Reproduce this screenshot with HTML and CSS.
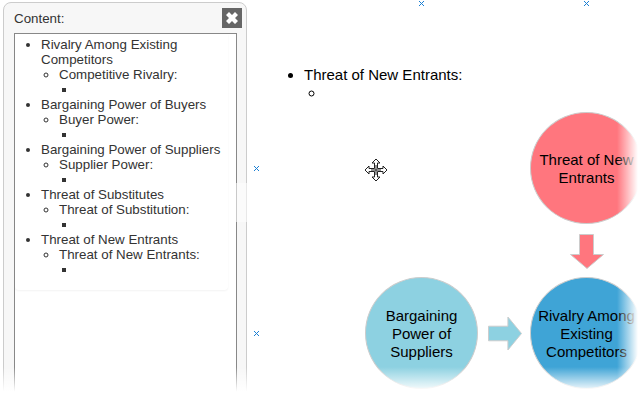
FILE: index.html
```html
<!DOCTYPE html>
<html lang="en">
<head>
    <meta charset="UTF-8">
    <meta name="viewport" content="width=device-width, initial-scale=1.0">
    <title>Slide Editor</title>
    <link rel="stylesheet" href="styles.css">
</head>
<body>
    <!-- Content panel -->
    <aside class="panel">
        <div class="panel-head">
            <span>Content:</span>
            <button class="close-button" aria-label="Close">
                <svg viewBox="0 0 20 20" width="20" height="20"><path d="M4 7l3-3 3 3 3-3 3 3-3 3 3 3-3 3-3-3-3 3-3-3 3-3z" fill="#fff"/></svg>
            </button>
        </div>
        <div class="panel-box">
            <div class="outline">
                <ul>
                    <li>Rivalry Among Existing Competitors
                        <ul><li>Competitive Rivalry:<ul><li></li></ul></li></ul>
                    </li>
                    <li>Bargaining Power of Buyers
                        <ul><li>Buyer Power:<ul><li></li></ul></li></ul>
                    </li>
                    <li>Bargaining Power of Suppliers
                        <ul><li>Supplier Power:<ul><li></li></ul></li></ul>
                    </li>
                    <li>Threat of Substitutes
                        <ul><li>Threat of Substitution:<ul><li></li></ul></li></ul>
                    </li>
                    <li>Threat of New Entrants
                        <ul><li>Threat of New Entrants:<ul><li></li></ul></li></ul>
                    </li>
                </ul>
            </div>
        </div>
    </aside>

    <!-- Faint patch over the panel edge -->
    <div class="ghost"></div>

    <!-- Slide canvas -->
    <main class="slide">
        <svg class="mark mark-a" viewBox="0 0 5 5"><path d="M0 0l5 5M5 0l-5 5"/></svg>
        <svg class="mark mark-b" viewBox="0 0 5 5"><path d="M0 0l5 5M5 0l-5 5"/></svg>
        <svg class="mark mark-c" viewBox="0 0 5 5"><path d="M0 0l5 5M5 0l-5 5"/></svg>
        <svg class="mark mark-d" viewBox="0 0 5 5"><path d="M0 0l5 5M5 0l-5 5"/></svg>

        <ul class="slide-text">
            <li>Threat of New Entrants:
                <ul><li></li></ul>
            </li>
        </ul>

        <svg class="move-cursor" viewBox="0 0 24 24" width="24" height="24">
            <path d="M12 1l4 4h-2.500v5.500H19V8l4 4-4 4v-2.500h-5.500V19H16l-4 4-4-4h2.500v-5.500H5V16l-4-4 4-4v2.500h5.500V5H8z" fill="#fff" stroke="#222" stroke-width="1"/>
            <path d="M12 7v10M7 12h10" stroke="#222" stroke-width="1"/>
        </svg>

        <div class="node node-red node-top">Threat of New Entrants</div>
        <div class="node node-teal node-left">Bargaining Power of Suppliers</div>
        <div class="node node-blue node-main">Rivalry Among Existing Competitors</div>

        <svg class="arrow arrow-down" viewBox="0 0 34 35"><path d="M9.500 .5h14v20h10l-16.500 14-16.500-14h9z" fill="#ff767e" stroke="#ccc"/></svg>
        <svg class="arrow arrow-right" viewBox="0 0 35 35"><path d="M.5 10h20V.5l14 17-14 17V25H.5z" fill="#8dd1e1" stroke="#ccc"/></svg>
    </main>

    <div class="fade-right"></div>
    <div class="fade-bottom"></div>
</body>
</html>
```

FILE: styles.css
```css
/* General styles */
html, body {
    height: 100%;
}

body {
    font-family: "Liberation Sans", Arial, sans-serif;
    margin: 0;
    padding: 2px 0 0 3px;
    box-sizing: border-box;
    overflow: hidden;
    background: #fff;
    color: #333;
}

/* Content panel */
.panel {
    width: 244px;
    height: 420px;
    box-sizing: border-box;
    padding: 0 9px 0 10px;
    background: #f7f7f7;
    border: 1px solid #ccc;
    border-radius: 8px;
    font-size: 13.33px;
}

.panel-head {
    height: 30px;
    display: flex;
    justify-content: space-between;
    align-items: center;
}

.close-button {
    width: 20px;
    height: 20px;
    margin-right: -5px;
    padding: 0;
    border: none;
    background: #666;
    display: flex;
}

.panel-box {
    height: 380px;
    box-sizing: border-box;
    background: #fff;
    border: 1px solid #888;
}

.outline {
    width: 213px;
    height: 256px;
    padding-top: 3px;
    box-sizing: border-box;
    border-radius: 0 0 4px 4px;
    box-shadow: 0 1px 2px rgba(0, 0, 0, 0.05);
}

.outline ul {
    margin: 0;
    padding-left: 18px;
    line-height: 15px;
}

.outline > ul {
    padding-left: 26px;
}

.outline li li li {
    height: 15px;
}

.ghost {
    position: absolute;
    left: 236px;
    top: 183px;
    width: 12px;
    height: 39px;
    background: rgba(255, 255, 255, 0.55);
}

/* Slide canvas */
.slide {
    position: absolute;
    top: 0;
    left: 0;
    width: 638px;
    height: 405px;
    pointer-events: none;
}

.mark {
    position: absolute;
    width: 5px;
    height: 5px;
    fill: none;
    stroke: #1a7fd4;
    stroke-width: 1;
}

.mark-a { left: 419px; top: 1px; }
.mark-b { left: 584px; top: 1px; }
.mark-c { left: 254px; top: 166px; }
.mark-d { left: 254px; top: 331px; }

.slide-text {
    position: absolute;
    left: 264px;
    top: 66px;
    width: 300px;
    margin: 0;
    padding-left: 40px;
    font-size: 15px;
    line-height: 18px;
    color: #000;
}

.slide-text ul {
    margin: 0;
    padding-left: 21px;
    height: 18px;
}

.slide-text li li {
    height: 18px;
}

.move-cursor {
    position: absolute;
    left: 364px;
    top: 158px;
}

.node {
    position: absolute;
    width: 113px;
    height: 112px;
    box-sizing: border-box;
    border: 1px solid #ccc;
    border-radius: 50%;
    display: flex;
    align-items: center;
    justify-content: center;
    text-align: center;
    font-size: 15px;
    line-height: 18px;
    color: #000;
}

.node-red { background: #ff767e; }
.node-teal { background: #8dd1e1; }
.node-blue { background: #3fa4d6; }

.node-top { left: 530px; top: 112px; padding-top: 2px; }
.node-left { left: 365px; top: 277px; padding: 2px 8px 0; }
.node-main { left: 530px; top: 277px; padding-top: 2px; }

.arrow {
    position: absolute;
    width: 34px;
    height: 35px;
}

.arrow-down { left: 570px; top: 234px; }
.arrow-right { left: 488px; top: 316px; }

/* Edge fades */
.fade-right {
    position: absolute;
    top: 0;
    right: 0;
    width: 21px;
    height: 405px;
    background: linear-gradient(to right, rgba(255, 255, 255, 0), #fff);
}

.fade-bottom {
    position: absolute;
    left: 0;
    bottom: 0;
    width: 638px;
    height: 38px;
    background: linear-gradient(to bottom, rgba(255, 255, 255, 0), #fff 65%);
}
```
